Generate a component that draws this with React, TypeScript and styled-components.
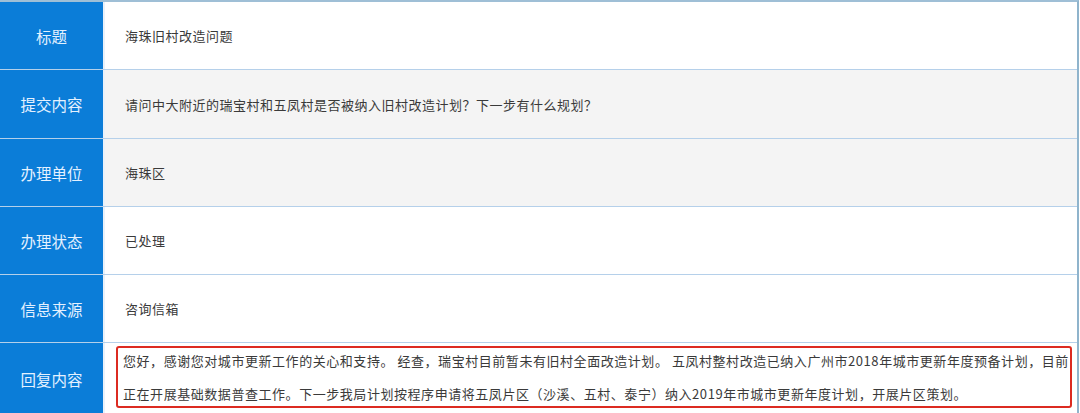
import React from "react";
import styled, { createGlobalStyle } from "styled-components";

const Global = createGlobalStyle`
  html, body { margin: 0; padding: 0; background: #ffffff; }
  body { font-family: "Noto Sans CJK SC", "Microsoft YaHei", sans-serif; }
`;

const Table = styled.div`
  width: 1079px;
  border-top: 2px solid #9fbfd6;
  border-right: 2px solid #8fb4cc;
  box-sizing: border-box;
  display: flex;
  flex-direction: column;
`;

const Row = styled.div<{ $h: number; $gray?: boolean }>`
  display: grid;
  grid-template-columns: 105px 1fr;
  height: ${(p) => p.$h}px;
  background: ${(p) => (p.$gray ? "#f4f4f4" : "#ffffff")};
  & + & { border-top: 1px solid #b5d0ea; }
`;

const Label = styled.div`
  background: #0b7dd8;
  color: #e4f1ff;
  font-size: 15.5px;
  display: flex;
  align-items: center;
  justify-content: center;
  border-right: 2px solid #e9f1fa;
`;

const Value = styled.div`
  display: flex;
  align-items: center;
  padding-left: 20px;
  font-size: 13px;
  letter-spacing: 0.5px;
  color: #3a3a3a;
`;

const ReplyCell = styled.div`
  display: flex;
  align-items: flex-start;
  padding: 3px 5px 0 11px;
`;

const ReplyBox = styled.div`
  flex: 1;
  height: 62px;
  box-sizing: border-box;
  border: 2px solid #dc2b21;
  border-radius: 3px;
  padding: 0 0 0 5px;
  display: flex;
  align-items: center;
  overflow: visible;
`;

const ReplyText = styled.p`
  margin: 0;
  font-size: 13px;
  letter-spacing: 0.55px;
  line-height: 33px;
  color: #3a3a3a;
`;

const rows = [
  { label: "标题", value: "海珠旧村改造问题", h: 67, gray: false },
  { label: "提交内容", value: "请问中大附近的瑞宝村和五凤村是否被纳入旧村改造计划？下一步有什么规划？", h: 68, gray: true },
  { label: "办理单位", value: "海珠区", h: 67, gray: true },
  { label: "办理状态", value: "已处理", h: 67, gray: false },
  { label: "信息来源", value: "咨询信箱", h: 67, gray: false },
];

export default function App() {
  return (
    <>
      <Global />
      <Table>
        {rows.map((r) => (
          <Row key={r.label} $h={r.h} $gray={r.gray}>
            <Label>{r.label}</Label>
            <Value>{r.value}</Value>
          </Row>
        ))}
        <Row $h={71}>
          <Label>回复内容</Label>
          <ReplyCell>
            <ReplyBox>
              <ReplyText>
                您好，感谢您对城市更新工作的关心和支持。 经查，瑞宝村目前暂未有旧村全面改造计划。 五凤村整村改造已纳入广州市2018年城市更新年度预备计划，目前正在开展基础数据普查工作。下一步我局计划按程序申请将五凤片区（沙溪、五村、泰宁）纳入2019年市城市更新年度计划，开展片区策划。
              </ReplyText>
            </ReplyBox>
          </ReplyCell>
        </Row>
      </Table>
    </>
  );
}
